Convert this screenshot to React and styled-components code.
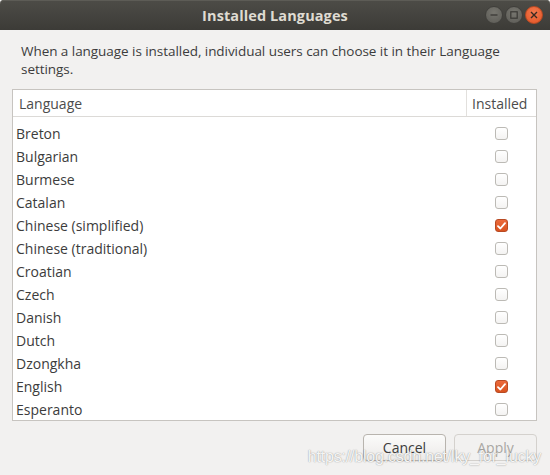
import { styled, createGlobalStyle } from "styled-components";

const GlobalStyle = createGlobalStyle`
    html, body {
        margin: 0;
        padding: 0;
        background: #f2f1f0;
    }
    * {
        box-sizing: border-box;
    }
`;

const languages = [
    { name: "Breton", installed: false },
    { name: "Bulgarian", installed: false },
    { name: "Burmese", installed: false },
    { name: "Catalan", installed: false },
    { name: "Chinese (simplified)", installed: true },
    { name: "Chinese (traditional)", installed: false },
    { name: "Croatian", installed: false },
    { name: "Czech", installed: false },
    { name: "Danish", installed: false },
    { name: "Dutch", installed: false },
    { name: "Dzongkha", installed: false },
    { name: "English", installed: true },
    { name: "Esperanto", installed: false },
];

const Window = styled.div`
    position: relative;
    width: 550px;
    height: 475px;
    display: flex;
    flex-direction: column;
    background: #f2f1f0;
    font-family: "Open Sans", "Noto Sans", sans-serif;
    font-size: 13.5px;
    color: #3c3c3c;
    overflow: hidden;
`;

const TitleBar = styled.div`
    height: 30px;
    flex-shrink: 0;
    display: flex;
    align-items: center;
    justify-content: center;
    position: relative;
    border-radius: 4px 4px 0 0;
    background: linear-gradient(#4d4c47, #3c3b37);
    box-shadow: inset 0 1px 0 #5d5c56;
`;

const Title = styled.span`
    color: #dfdbd2;
    font-weight: 700;
    font-size: 14.5px;
    letter-spacing: 0.1px;
`;

const WindowControls = styled.div`
    position: absolute;
    right: 7px;
    top: 6px;
    display: flex;
    gap: 2px;
`;

const ControlButton = styled.div`
    width: 18px;
    height: 18px;
    border-radius: 50%;
    display: flex;
    align-items: center;
    justify-content: center;
    background: ${(p) =>
        p.$close
            ? "radial-gradient(circle at 50% 35%, #f47a4f, #e25324)"
            : "radial-gradient(circle at 50% 35%, #77766f, #5b5a55)"};
    border: 1px solid ${(p) => (p.$close ? "#b84a23" : "#403f3b")};
`;

const Body = styled.div`
    flex: 1;
    display: flex;
    flex-direction: column;
    padding: 12px 13px 0 12px;
`;

const Intro = styled.p`
    margin: 0 0 11px;
    padding-left: 9px;
    line-height: 18px;
    color: #3c3c3c;
    letter-spacing: -0.05px;
`;

const TableBox = styled.div`
    height: 332px;
    background: #ffffff;
    border: 1px solid #c7c4c0;
    display: flex;
    flex-direction: column;
    overflow: hidden;
`;

const HeaderRow = styled.div`
    height: 27px;
    flex-shrink: 0;
    display: grid;
    grid-template-columns: 1fr 70px;
    border-bottom: 1px solid #dcdad7;
    margin-bottom: 5px;
`;

const HeaderCell = styled.div`
    display: flex;
    align-items: center;
    padding-left: ${(p) => (p.$check ? "5px" : "6px")};
    color: #4c4c4c;
    font-size: 14px;
    border-left: ${(p) => (p.$check ? "1px solid #e2e0dd" : "none")};
`;

const Row = styled.div`
    height: 23px;
    flex-shrink: 0;
    display: grid;
    grid-template-columns: 1fr 70px;
    align-items: center;
`;

const LangName = styled.span`
    padding-left: 3px;
    font-size: 14px;
    color: #3c3c3c;
`;

const CheckCell = styled.div`
    display: flex;
    justify-content: center;
`;

const Check = styled.div`
    width: 13px;
    height: 13px;
    border-radius: 3px;
    display: flex;
    align-items: center;
    justify-content: center;
    border: 1px solid ${(p) => (p.$on ? "#b84a23" : "#bcbab5")};
    background: ${(p) =>
        p.$on ? "linear-gradient(#ec6a3b, #d9531f)" : "linear-gradient(#ffffff, #f4f3f2)"};
`;

const Footer = styled.div`
    display: flex;
    justify-content: flex-end;
    gap: 8px;
    padding-top: 13px;
`;

const Button = styled.button`
    width: 83px;
    height: 27px;
    border-radius: 4px;
    font-family: inherit;
    font-size: 14px;
    border: 1px solid ${(p) => (p.disabled ? "#d4d1cd" : "#b8b4ae")};
    color: ${(p) => (p.disabled ? "#a9a7a3" : "#3c3c3c")};
    background: ${(p) =>
        p.disabled ? "#f2f1f0" : "linear-gradient(#fbfbfa, #eceae8)"};
    box-shadow: ${(p) => (p.disabled ? "none" : "0 1px 1px rgba(0,0,0,0.06)")};
    padding: 0;
`;

const Watermark = styled.span`
    position: absolute;
    right: 9px;
    bottom: 9px;
    font-family: "Liberation Sans", Arial, sans-serif;
    font-size: 16px;
    letter-spacing: -0.2px;
    color: rgba(255, 255, 255, 0.92);
    text-shadow: 0 0 1px rgba(0, 0, 0, 0.35), 0 0 2px rgba(0, 0, 0, 0.15);
    pointer-events: none;
`;

function CheckMark() {
    return (
        <svg width="9" height="8" viewBox="0 0 9 8">
            <path
                d="M1 4.2 L3.4 6.5 L8 1.2"
                fill="none"
                stroke="#ffffff"
                strokeWidth="1.8"
                strokeLinecap="round"
                strokeLinejoin="round"
            />
        </svg>
    );
}

function App() {
    return (
        <Window>
            <GlobalStyle />
            <TitleBar>
                <Title>Installed Languages</Title>
                <WindowControls>
                    <ControlButton>
                        <svg width="8" height="8" viewBox="0 0 8 8">
                            <path d="M0.5 4 H7.5" stroke="#3a3935" strokeWidth="1.3" />
                        </svg>
                    </ControlButton>
                    <ControlButton>
                        <svg width="8" height="8" viewBox="0 0 8 8">
                            <rect x="0.8" y="0.8" width="6.4" height="6.4" fill="none" stroke="#3a3935" strokeWidth="1.2" />
                        </svg>
                    </ControlButton>
                    <ControlButton $close>
                        <svg width="8" height="8" viewBox="0 0 8 8">
                            <path d="M1 1 L7 7 M7 1 L1 7" stroke="#3a2a22" strokeWidth="1.4" />
                        </svg>
                    </ControlButton>
                </WindowControls>
            </TitleBar>

            <Body>
                <Intro>
                    When a language is installed, individual users can choose it in their Language
                    settings.
                </Intro>

                <TableBox>
                    <HeaderRow>
                        <HeaderCell>Language</HeaderCell>
                        <HeaderCell $check>Installed</HeaderCell>
                    </HeaderRow>
                    {languages.map((lang) => (
                        <Row key={lang.name}>
                            <LangName>{lang.name}</LangName>
                            <CheckCell>
                                <Check $on={lang.installed}>{lang.installed && <CheckMark />}</Check>
                            </CheckCell>
                        </Row>
                    ))}
                </TableBox>

                <Footer>
                    <Button>Cancel</Button>
                    <Button disabled>Apply</Button>
                </Footer>
            </Body>

            <Watermark>https://blog.csdn.net/lky_for_lucky</Watermark>
        </Window>
    );
}

export default App;
